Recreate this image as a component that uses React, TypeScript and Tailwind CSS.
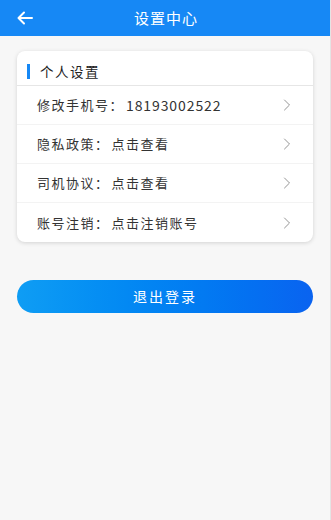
import { ChevronRight } from "lucide-react";

const rows = [
  { label: "修改手机号：", value: "18193002522" },
  { label: "隐私政策：", value: "点击查看" },
  { label: "司机协议：", value: "点击查看" },
  { label: "账号注销：", value: "点击注销账号" },
];

export default function App() {
  return (
    <div
      className="flex h-[520px] w-[331px] flex-col bg-[#f7f7f7] border-r border-[#e4e4e4]"
      style={{ fontFamily: '"Noto Sans CJK SC", "Noto Sans", sans-serif' }}
    >
      <div className="relative flex h-[36px] items-center justify-center bg-[#1688f5] text-[15px] tracking-[1px] text-white">
        <svg
          className="absolute left-[17px] top-[11px]"
          width="16"
          height="14"
          viewBox="0 0 16 14"
          fill="none"
          stroke="white"
          strokeWidth="2"
          strokeLinecap="round"
          strokeLinejoin="round"
        >
          <path d="M15 7H2M7 1.5L1.5 7L7 12.5" />
        </svg>
        <span className="pl-[2px]">设置中心</span>
      </div>

      <div className="mx-[17px] mt-[15px] rounded-[8px] bg-white shadow-[0_1px_4px_rgba(0,0,0,0.15)]">
        <div className="flex h-[35px] items-center border-b border-[#e6e6e6] pl-[10px] pt-[6px]">
          <div className="h-[15px] w-[3px] bg-[#1688f5]" />
          <span className="ml-[10px] text-[13.5px] tracking-[1.5px] text-[#222]">个人设置</span>
        </div>
        {rows.map((r, idx) => (
          <div
            key={idx}
            className={
              "flex h-[39px] items-center pl-[20px] pr-[16px] text-[13px] text-[#333] " +
              (idx < rows.length - 1 ? "border-b border-[#f3f3f3]" : "")
            }
          >
            <span className="tracking-[1.5px]">{r.label}</span>
            <span
              className={
                idx === 0
                  ? "ml-[2px] text-[14px] tracking-[0.9px]"
                  : "ml-[2px] tracking-[1.5px]"
              }
            >
              {r.value}
            </span>
            <ChevronRight className="ml-auto text-[#8a8a8a]" size={20} strokeWidth={1.1} />
          </div>
        ))}
      </div>

      <div className="mx-[17px] mt-[38px] flex h-[33px] items-center justify-center rounded-full bg-gradient-to-r from-[#0f9df4] to-[#0a63f0] text-[14px] tracking-[2px] text-white">
        退出登录
      </div>
    </div>
  );
}
